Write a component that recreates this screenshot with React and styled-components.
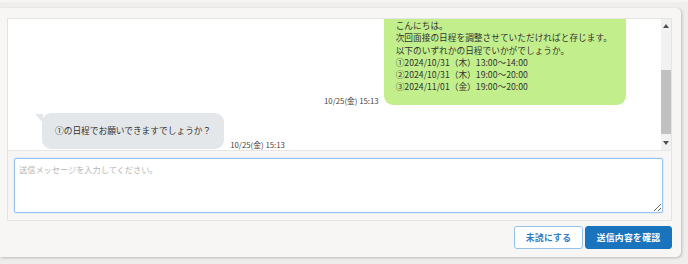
import React from "react";
import styled, { createGlobalStyle } from "styled-components";

const GlobalStyle = createGlobalStyle`
  html, body { margin: 0; padding: 0; }
  body {
    background: #efeeec;
    font-family: "Noto Sans CJK JP", "Noto Sans", sans-serif;
    color: #333;
    width: 688px;
    height: 264px;
    overflow: hidden;
  }
`;

const TopStrip = styled.div`
  height: 2px;
  background: #f6f5f3;
`;

const Card = styled.div`
  margin-top: 6px;
  width: 681px;
  height: 249px;
  box-sizing: border-box;
  background: #f7f6f4;
  border-radius: 0 5px 5px 0;
  box-shadow: 1px 1px 3px rgba(0, 0, 0, 0.22);
  padding: 10px 9px 8px 7px;
  display: flex;
  flex-direction: column;
  gap: 5px;
`;

const Panel = styled.div`
  border: 1px solid #e6e4e1;
  display: flex;
  flex-direction: column;
`;

const ChatArea = styled.div`
  height: 131px;
  background: #fff;
  border-bottom: 1px solid #e8e6e3;
  display: flex;
`;

const Messages = styled.div`
  flex: 1;
  overflow: hidden;
  display: flex;
  flex-direction: column;
  justify-content: flex-end;
  gap: 8px;
  padding-bottom: 1px;
`;

const Row = styled.div`
  display: flex;
  align-items: flex-end;
  justify-content: ${(p) => (p.$out ? "flex-end" : "flex-start")};
  padding: ${(p) => (p.$out ? "0 35px 0 0" : "0 0 0 34px")};
  gap: ${(p) => (p.$out ? "5px" : "6px")};
`;

const Bubble = styled.div`
  position: relative;
  background: ${(p) => (p.$out ? "#c2ef8c" : "#e4e7ea")};
  border-radius: 9px;
  font-size: 8.7px;
  line-height: 12.3px;
  color: #333;
  padding: ${(p) => (p.$out ? "10px 14px 11px 12px" : "12px 13px 12px 13px")};
  white-space: pre;

  ${(p) =>
    !p.$out &&
    `
    &::before {
      content: "";
      position: absolute;
      left: -7px;
      top: 1px;
      border-top: 9px solid #e4e7ea;
      border-left: 8px solid transparent;
    }
  `}
`;

const Time = styled.span`
  font-size: 7.8px;
  line-height: 9px;
  color: #444;
  white-space: nowrap;
`;

const ScrollTrack = styled.div`
  width: 10px;
  background: #f1f1f1;
  display: flex;
  flex-direction: column;
  align-items: center;
`;

const Arrow = styled.div`
  height: 14px;
  width: 10px;
  display: flex;
  align-items: center;
  justify-content: center;
`;

const ThumbSpace = styled.div`
  flex: 1;
  width: 10px;
  display: flex;
  flex-direction: column;
  justify-content: flex-end;
  padding-bottom: 2px;
`;

const Thumb = styled.div`
  height: 64px;
  background: #c1c1c1;
`;

const InputArea = styled.div`
  background: #f7f6f4;
  padding: 7px 8px 7px 6px;
  display: flex;
`;

const TextArea = styled.textarea`
  flex: 1;
  height: 55px;
  box-sizing: border-box;
  border: 1px solid #94c3f2;
  box-shadow: 0 0 1.5px #a9d0f8;
  border-radius: 2px;
  background: #fff;
  font-family: "Noto Sans CJK JP", "Noto Sans", sans-serif;
  font-size: 8.2px;
  line-height: 12px;
  padding: 4px 4px;
  color: #333;
  outline: none;
  &::placeholder { color: #b5b5b5; }
`;

const Actions = styled.div`
  display: flex;
  justify-content: flex-end;
  gap: 2px;
`;

const Button = styled.button`
  height: 23px;
  box-sizing: border-box;
  border-radius: 3px;
  font-family: "Noto Sans CJK JP", "Noto Sans", sans-serif;
  font-size: 8.8px;
  font-weight: 700;
  letter-spacing: 0.3px;
  white-space: nowrap;
  cursor: pointer;
  border: 1px solid ${(p) => (p.$primary ? "#1a74bd" : "#93c2e8")};
  background: ${(p) => (p.$primary ? "#1a74bd" : "#fff")};
  color: ${(p) => (p.$primary ? "#fff" : "#2c7cc0")};
  padding: 0;
  width: ${(p) => (p.$primary ? "87px" : "69px")};
`;

const Tri = ({ down }) => (
  <svg width="6" height="4" viewBox="0 0 6 4">
    <polygon points={down ? "0,0 6,0 3,4" : "0,4 6,4 3,0"} fill="#505050" />
  </svg>
);

export default function App() {
  const outText =
    "こんにちは。\n次回面接の日程を調整させていただければと存じます。\n以下のいずれかの日程でいかがでしょうか。\n①2024/10/31（木）13:00～14:00\n②2024/10/31（木）19:00～20:00\n③2024/11/01（金）19:00～20:00";
  return (
    <>
      <GlobalStyle />
      <TopStrip />
      <Card>
        <Panel>
          <ChatArea>
            <Messages>
              <Row $out>
                <Time>10/25(金) 15:13</Time>
                <Bubble $out>{outText}</Bubble>
              </Row>
              <Row>
                <Bubble>①の日程でお願いできますでしょうか？</Bubble>
                <Time>10/25(金) 15:13</Time>
              </Row>
            </Messages>
            <ScrollTrack>
              <Arrow><Tri /></Arrow>
              <ThumbSpace>
                <Thumb />
              </ThumbSpace>
              <Arrow><Tri down /></Arrow>
            </ScrollTrack>
          </ChatArea>
          <InputArea>
            <TextArea placeholder="送信メッセージを入力してください。" />
          </InputArea>
        </Panel>
        <Actions>
          <Button>未読にする</Button>
          <Button $primary>送信内容を確認</Button>
        </Actions>
      </Card>
    </>
  );
}
